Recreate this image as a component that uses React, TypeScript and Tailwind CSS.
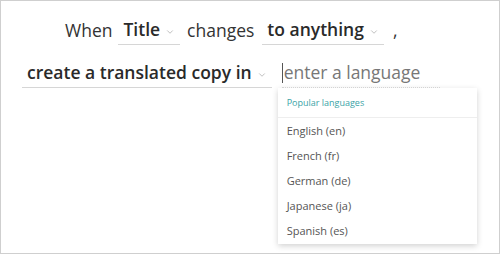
import { ChevronDown } from 'lucide-react';

const languages = ['English (en)', 'French (fr)', 'German (de)', 'Japanese (ja)', 'Spanish (es)'];

function Picker({ label, className }: { label: string; className?: string }) {
  return (
    <span className={`flex items-center gap-[5px] border-b border-[#d6d6d6] pl-[5px] pr-[5px] h-[30px] ${className ?? ''}`}>
      <span className="font-semibold text-[#2a2a2a]">{label}</span>
      <ChevronDown size={10} strokeWidth={1.5} className="text-[#9a9a9a] mt-[5px]" />
    </span>
  );
}

export default function App() {
  return (
    <div
      className="w-[500px] h-[254px] bg-white border border-[#cfcfcf] text-[17.5px] text-[#333] overflow-hidden"
      style={{ fontFamily: '"Open Sans", "Noto Sans", sans-serif' }}
    >
      <div className="flex items-center pl-[64px] pt-[14px] h-[44px]">
        <span>When</span>
        <Picker label="Title" className="ml-[6px]" />
        <span className="ml-[7px]">changes</span>
        <Picker label="to anything" className="ml-[8px]" />
        <span className="ml-[9px]">,</span>
      </div>
      <div className="flex items-center pl-[21px] pt-[13px]">
        <Picker label="create a translated copy in" className="pr-[3px] gap-[3px]" />
        <div className="relative ml-[10px]">
          <div className="flex items-center h-[30px] w-[158px] border-b border-dotted border-[#dcdcdc]">
            <span className="w-px h-[20px] bg-[#555]" />
            <span className="text-[#777] ml-[1px]">enter a language</span>
          </div>
          <div className="absolute left-[-4px] top-[30px] w-[199px] bg-white shadow-[0_2px_6px_rgba(0,0,0,0.18)] text-[11px] text-[#555]">
            <div className="h-[30px] flex items-center px-[9px] text-[9px] text-[#3aa3a6] border-b border-[#eeeeee]">
              Popular languages
            </div>
            <div className="pt-[1px]">
              {languages.map((lang) => (
                <div key={lang} className="h-[25px] flex items-center px-[9px]">
                  {lang}
                </div>
              ))}
            </div>
          </div>
        </div>
      </div>
    </div>
  );
}
